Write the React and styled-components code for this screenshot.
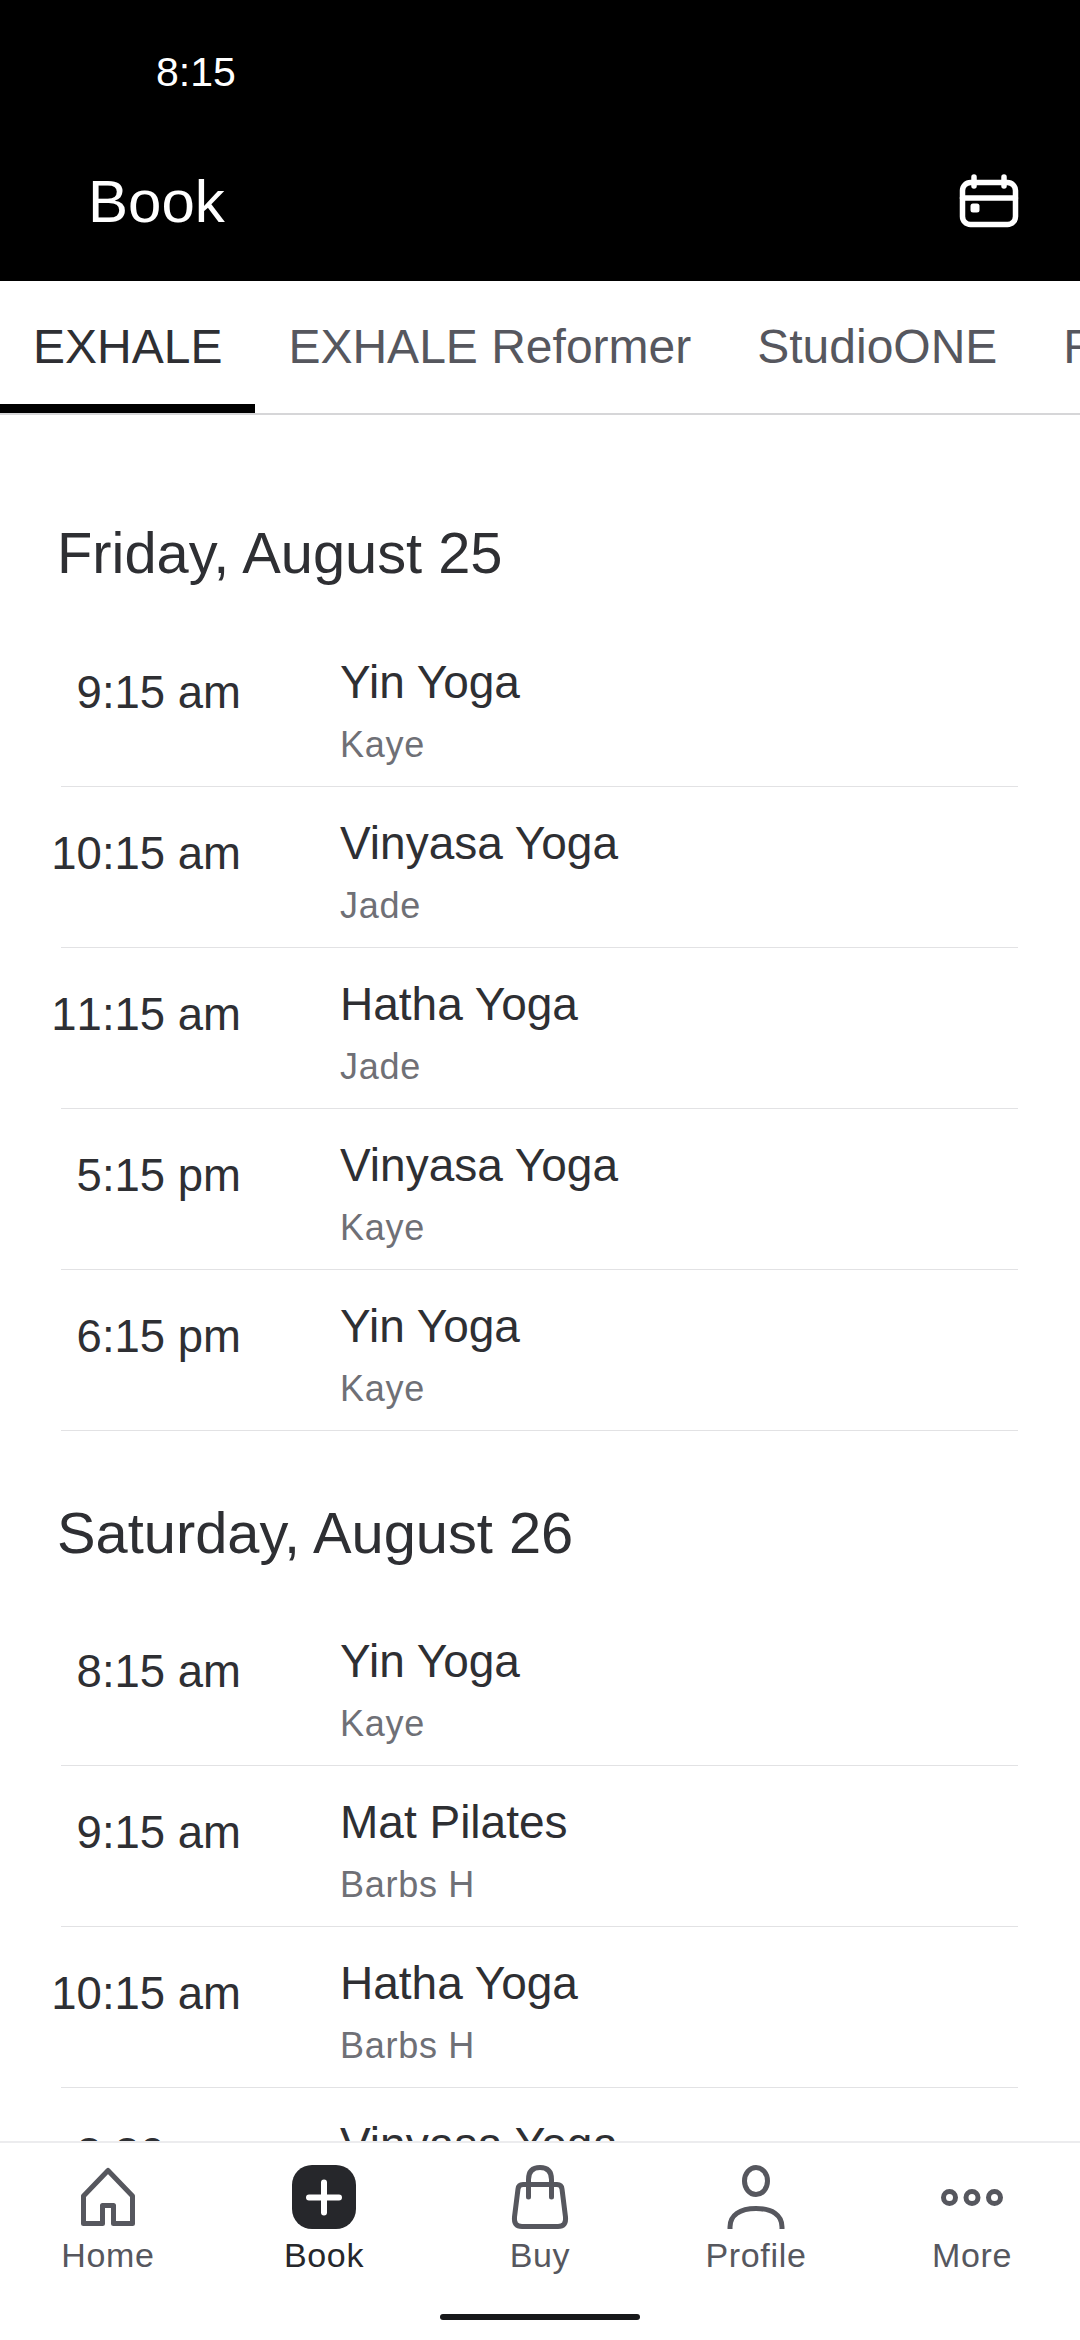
import React from 'react';
import styled, { createGlobalStyle } from 'styled-components';

const Global = createGlobalStyle`
  html, body { margin: 0; padding: 0; background: #fff; }
  body { font-family: "Liberation Sans", Arial, sans-serif; }
`;

const Page = styled.div`
  width: 1080px;
  height: 2340px;
  display: flex;
  flex-direction: column;
  overflow: hidden;
  background: #fff;
`;

const Header = styled.header`
  flex: none;
  height: 281px;
  background: #000;
  color: #fff;
  display: flex;
  flex-direction: column;
`;

const StatusBar = styled.div`
  height: 144px;
  padding-left: 156px;
  font-size: 41px;
  line-height: 144px;
`;

const TitleBar = styled.div`
  display: flex;
  align-items: center;
  justify-content: space-between;
  padding: 0 59px 0 88px;
  height: 114px;
`;

const Title = styled.h1`
  margin: 0;
  font-size: 60px;
  font-weight: 400;
`;

const Tabs = styled.nav`
  flex: none;
  height: 132px;
  display: flex;
  overflow: hidden;
  border-bottom: 2px solid #d6d6d8;
`;

const Tab = styled.div`
  flex: none;
  padding: 0 33px;
  line-height: 132px;
  font-size: 48px;
  white-space: nowrap;
  color: ${p => (p.$active ? '#2e2f33' : '#56575e')};
  box-shadow: ${p => (p.$active ? 'inset 0 -9px 0 #000' : 'none')};
`;

const Schedule = styled.main`
  flex: 1;
  min-height: 0;
  overflow: hidden;
`;

const DayTitle = styled.h2`
  margin: 0;
  box-sizing: border-box;
  padding: ${p => (p.$first ? '104px' : '68px')} 0 0 57px;
  height: ${p => (p.$first ? '211px' : '174px')};
  font-size: 57.8px;
  line-height: 68px;
  font-weight: 400;
  color: #2e2f33;
`;

const Row = styled.div`
  display: flex;
  height: 160px;
  margin: 0 62px 0 61px;
  border-bottom: 1px solid #e2e2e4;
`;

const Time = styled.div`
  width: 210px;
  margin-left: -30px;
  flex: none;
  text-align: right;
  white-space: nowrap;
  font-size: 45.5px;
  font-kerning: none;
  line-height: 52px;
  padding-top: 41px;
  color: #2e2f33;
`;

const Info = styled.div`
  margin-left: 99px;
`;

const ClassName = styled.div`
  font-size: 46px;
  line-height: 54px;
  padding-top: 29px;
  color: #2e2f33;
`;

const Teacher = styled.div`
  font-size: 36px;
  letter-spacing: 0.72px;
  line-height: 44px;
  margin-top: 14px;
  color: #6f7076;
`;

const BottomNav = styled.footer`
  flex: none;
  height: 197px;
  border-top: 2px solid #ececee;
  background: #fff;
  display: flex;
  flex-direction: column;
  position: relative;
  z-index: 1;
`;

const NavItems = styled.div`
  display: grid;
  grid-template-columns: repeat(5, 216px);
  padding-top: 22px;
`;

const NavItem = styled.div`
  display: flex;
  flex-direction: column;
  align-items: center;
  color: ${p => (p.$active ? '#26272b' : '#56575e')};
  font-size: 34px;
  letter-spacing: 0.68px;
  line-height: 40px;
  svg { display: block; margin-bottom: 6px; }
`;

const HomeBar = styled.div`
  width: 200px;
  height: 6px;
  margin: 39px auto 0;
  border-radius: 3px;
  background: #17181a;
`;

const CalendarIcon = () => (
  <svg width="64" height="64" viewBox="0 0 64 64" fill="none" stroke="#fff" strokeWidth="5.5" strokeLinecap="round">
    <rect x="5.5" y="13.5" width="53" height="42" rx="8" />
    <path d="M5.5 29H58.5M17 8V17M47 8V17" />
    <rect x="13.500" y="34.500" width="9" height="9" rx="2.500" fill="#fff" stroke="none" />
  </svg>
);

const iconProps = { width: 64, height: 64, viewBox: '0 0 64 64', fill: 'none', stroke: '#56575e', strokeWidth: 5 };

const HomeIcon = () => (
  <svg {...iconProps} strokeLinejoin="round">
    <path d="M32 5.5L7.5 31V58.5H26.5V40.5H37.5V58.5H56.5V31Z" />
  </svg>
);

const BookIcon = () => (
  <svg width="64" height="64" viewBox="0 0 64 64" fill="none">
    <rect width="64" height="64" rx="20" fill="#26272b" />
    <path d="M17 32.5H47M32 17.5V47.5" stroke="#fff" strokeWidth="6" strokeLinecap="round" />
  </svg>
);

const BuyIcon = () => (
  <svg {...iconProps} strokeLinecap="round">
    <path d="M15 19.5H49Q53.5 19.5 54 24L57.5 52Q58.5 61.5 50 61.5H14Q5.5 61.5 6.5 52L10 24Q10.5 19.5 15 19.5Z" />
    <path d="M20.500 32V14.500C20.500 6 25 2.500 32 2.500C39 2.500 43.500 6 43.500 14.500V32" />
  </svg>
);

const ProfileIcon = () => (
  <svg {...iconProps}>
    <ellipse cx="32" cy="16" rx="11.500" ry="13.500" />
    <path d="M6 64V62C6 50 16 43.500 32 43.500C48 43.500 58 50 58 62V64" />
  </svg>
);

const MoreIcon = () => (
  <svg {...iconProps}>
    <circle cx="9.500" cy="32.500" r="6" />
    <circle cx="32" cy="32.500" r="6" />
    <circle cx="54.500" cy="32.500" r="6" />
  </svg>
);

const days = [
  {
    title: 'Friday, August 25',
    rows: [
      ['9:15 am', 'Yin Yoga', 'Kaye'],
      ['10:15 am', 'Vinyasa Yoga', 'Jade'],
      ['11:15 am', 'Hatha Yoga', 'Jade'],
      ['5:15 pm', 'Vinyasa Yoga', 'Kaye'],
      ['6:15 pm', 'Yin Yoga', 'Kaye'],
    ],
  },
  {
    title: 'Saturday, August 26',
    rows: [
      ['8:15 am', 'Yin Yoga', 'Kaye'],
      ['9:15 am', 'Mat Pilates', 'Barbs H'],
      ['10:15 am', 'Hatha Yoga', 'Barbs H'],
      ['3:30 pm', 'Vinyasa Yoga', 'Kaye'],
    ],
  },
];

const tabs = ['EXHALE', 'EXHALE Reformer', 'StudioONE', 'Reformer'];

const navItems = [
  ['Home', HomeIcon],
  ['Book', BookIcon],
  ['Buy', BuyIcon],
  ['Profile', ProfileIcon],
  ['More', MoreIcon],
];

export default function App() {
  return (
    <Page>
      <Global />
      <Header>
        <StatusBar>8:15</StatusBar>
        <TitleBar>
          <Title>Book</Title>
          <CalendarIcon />
        </TitleBar>
      </Header>
      <Tabs>
        {tabs.map((t, i) => (
          <Tab key={t} $active={i === 0}>{t}</Tab>
        ))}
      </Tabs>
      <Schedule>
        {days.map((day, i) => (
          <section key={day.title}>
            <DayTitle $first={i === 0}>{day.title}</DayTitle>
            {day.rows.map(([time, name, teacher]) => (
              <Row key={time}>
                <Time>{time}</Time>
                <Info>
                  <ClassName>{name}</ClassName>
                  <Teacher>{teacher}</Teacher>
                </Info>
              </Row>
            ))}
          </section>
        ))}
      </Schedule>
      <BottomNav>
        <NavItems>
          {navItems.map(([label, Icon]) => (
            <NavItem key={label} $active={label === 'Book'}>
              <Icon />
              {label}
            </NavItem>
          ))}
        </NavItems>
        <HomeBar />
      </BottomNav>
    </Page>
  );
}
